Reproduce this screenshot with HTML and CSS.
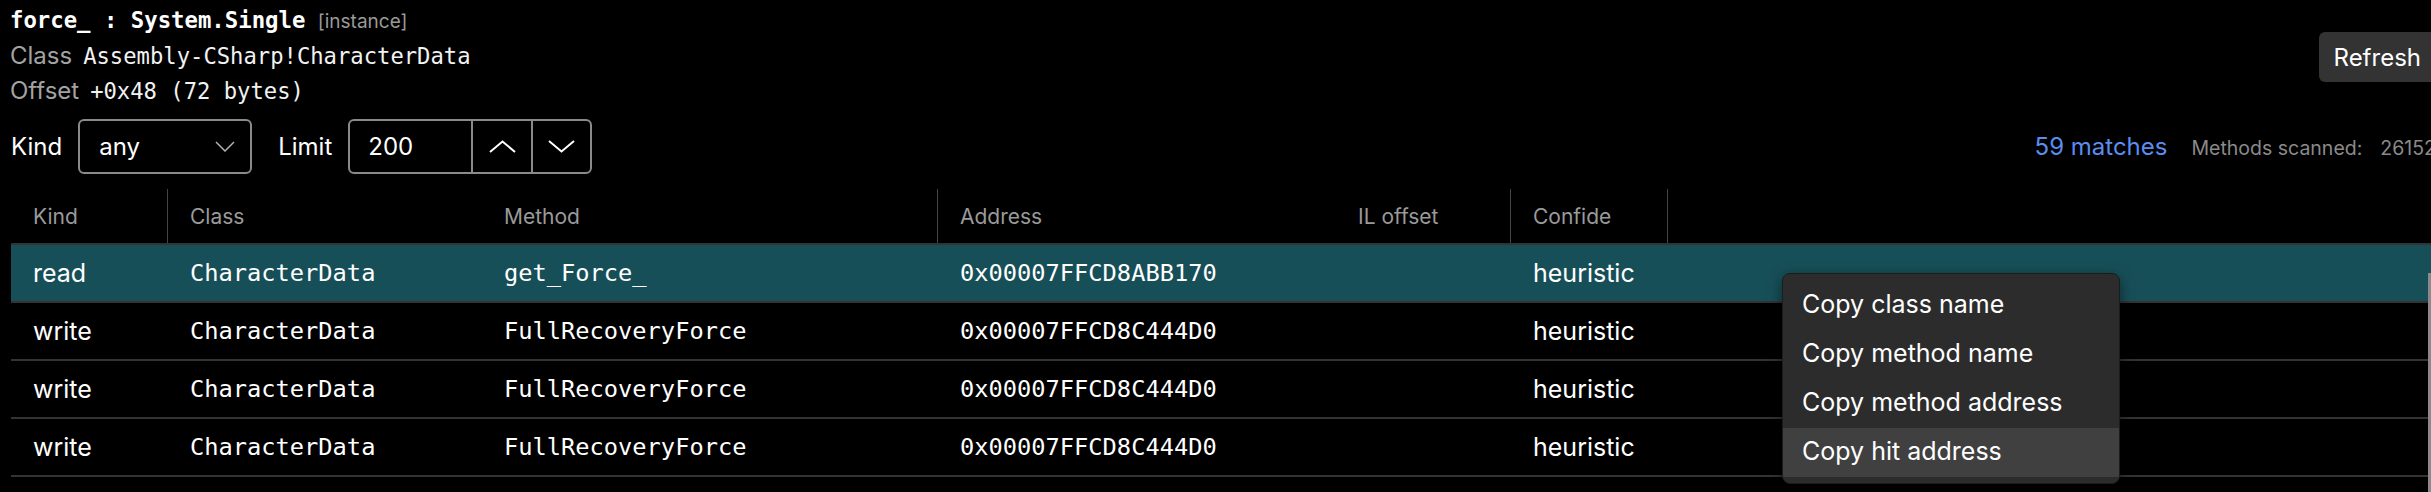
FILE: index.html
```html
<!DOCTYPE html>
<html>
<head>
<meta charset="utf-8">
<link rel="stylesheet" href="styles.css">
</head>
<body>
<div class="app">
  <div class="top">
    <div class="info">
      <div class="line"><span class="title-mono">force_ : System.Single</span> <span class="tag">[instance]</span></div>
      <div class="line"><span class="lab">Class</span><span class="val-mono">Assembly-CSharp!CharacterData</span></div>
      <div class="line"><span class="lab">Offset</span><span class="val-mono">+0x48 (72 bytes)</span></div>
    </div>
    <button class="refresh">Refresh</button>
  </div>

  <div class="controls">
    <div class="left-controls">
      <span class="clabel">Kind</span>
      <div class="select">
        <span>any</span>
        <svg width="20" height="11" viewBox="0 0 20 11"><polyline points="1,1 10,10 19,1" fill="none" stroke="#b0b0b0" stroke-width="1.5"/></svg>
      </div>
      <span class="clabel limit-label">Limit</span>
      <div class="limit">
        <div class="limit-val">200</div>
        <div class="step step-up">
          <svg width="27" height="13" viewBox="0 0 27 13"><polyline points="1,12 13.5,1.5 26,12" fill="none" stroke="#fff" stroke-width="2"/></svg>
        </div>
        <div class="step step-down">
          <svg width="27" height="13" viewBox="0 0 27 13"><polyline points="1,1 13.5,11.5 26,1" fill="none" stroke="#fff" stroke-width="2"/></svg>
        </div>
      </div>
    </div>
    <div class="stats">
      <span class="matches">59 matches</span>
      <span class="scanned">Methods scanned:</span>
      <span class="scanned num">26152</span>
    </div>
  </div>

  <div class="table">
    <div class="thead">
      <div class="th rz">Kind</div>
      <div class="th">Class</div>
      <div class="th rz">Method</div>
      <div class="th">Address</div>
      <div class="th rz">IL offset</div>
      <div class="th rz">Confide</div>
      <div class="th"></div>
    </div>
    <div class="tr sel">
      <div class="td">read</div>
      <div class="td mono">CharacterData</div>
      <div class="td mono">get_Force_</div>
      <div class="td mono">0x00007FFCD8ABB170</div>
      <div class="td"></div>
      <div class="td">heuristic</div>
      <div class="td"></div>
    </div>
    <div class="tr">
      <div class="td">write</div>
      <div class="td mono">CharacterData</div>
      <div class="td mono">FullRecoveryForce</div>
      <div class="td mono">0x00007FFCD8C444D0</div>
      <div class="td"></div>
      <div class="td">heuristic</div>
      <div class="td"></div>
    </div>
    <div class="tr">
      <div class="td">write</div>
      <div class="td mono">CharacterData</div>
      <div class="td mono">FullRecoveryForce</div>
      <div class="td mono">0x00007FFCD8C444D0</div>
      <div class="td"></div>
      <div class="td">heuristic</div>
      <div class="td"></div>
    </div>
    <div class="tr">
      <div class="td">write</div>
      <div class="td mono">CharacterData</div>
      <div class="td mono">FullRecoveryForce</div>
      <div class="td mono">0x00007FFCD8C444D0</div>
      <div class="td"></div>
      <div class="td">heuristic</div>
      <div class="td"></div>
    </div>
  </div>
</div>

<div class="scroll-thumb"></div>

<div class="menu">
  <div class="mi">Copy class name</div>
  <div class="mi">Copy method name</div>
  <div class="mi">Copy method address</div>
  <div class="mi hover">Copy hit address</div>
</div>
</body>
</html>
```

FILE: styles.css
```css
html, body {
  margin: 0;
  padding: 0;
  background: #000;
  overflow: hidden;
}
body {
  width: 2431px;
  height: 492px;
  color: #fff;
  font-family: Inter, "Noto Sans", sans-serif;
}
.app {
  box-sizing: border-box;
  width: 2446px;
  padding: 0 10px;
}
.top {
  display: flex;
  justify-content: space-between;
  align-items: flex-start;
}
.info {
  padding-top: 3px;
}
.line {
  height: 35px;
  line-height: 35px;
  white-space: nowrap;
}
.title-mono {
  font-family: "DejaVu Sans Mono", monospace;
  font-weight: bold;
  font-size: 22.3px;
  color: #fff;
}
.tag {
  font-size: 19px;
  color: #9a9a9a;
  margin-left: 8px;
}
.lab {
  font-size: 24px;
  color: #a3a3a3;
  margin-right: 11px;
}
.val-mono {
  font-family: "DejaVu Sans Mono", monospace;
  font-size: 22.2px;
  color: #f2f2f2;
}
.refresh {
  margin-top: 32px;
  height: 50px;
  padding: 0 15px;
  background: #333;
  border: none;
  border-radius: 6px;
  color: #fff;
  font-family: Inter, sans-serif;
  font-size: 24px;
}
.controls {
  display: flex;
  justify-content: space-between;
  align-items: center;
  margin-top: 11px;
  height: 55px;
}
.left-controls {
  display: flex;
  align-items: center;
}
.clabel {
  font-size: 24px;
  margin-left: 1px;
  margin-right: 16px;
}
.limit-label {
  margin-left: 26px;
}
.select {
  box-sizing: border-box;
  width: 174px;
  height: 55px;
  border: 2px solid #8a8a8a;
  border-radius: 6px;
  display: flex;
  align-items: center;
  justify-content: space-between;
  padding: 0 15px 0 19px;
  font-size: 24px;
}
.limit {
  box-sizing: border-box;
  width: 244px;
  height: 55px;
  border: 2px solid #8a8a8a;
  border-radius: 6px;
  display: flex;
  font-size: 24px;
}
.limit-val {
  box-sizing: border-box;
  width: 123px;
  padding-left: 18px;
  border-right: 2px solid #8a8a8a;
  display: flex;
  align-items: center;
}
.step {
  display: flex;
  align-items: center;
  justify-content: center;
  box-sizing: border-box;
}
.step-up {
  width: 60px;
  border-right: 2px solid #8a8a8a;
}
.step-down {
  width: 57px;
}
.stats {
  display: flex;
  align-items: baseline;
  white-space: nowrap;
}
.matches {
  font-size: 24px;
  color: #5b8def;
}
.scanned {
  font-size: 19.5px;
  color: #8a8a8a;
  margin-left: 24px;
}
.scanned.num {
  margin-left: 18px;
}
.table {
  margin-top: 15px;
  margin-left: 1px;
}
.thead, .tr {
  display: grid;
  grid-template-columns: 157px 314px 456px 398px 175px 157px 1fr;
}
.thead {
  height: 54px;
  border-bottom: 2px solid #333;
}
.th {
  box-sizing: border-box;
  padding-left: 22px;
  display: flex;
  align-items: center;
  font-size: 21px;
  color: #9a9a9a;
  white-space: nowrap;
  overflow: hidden;
}
.th.rz {
  border-right: 1px solid #444;
}
.tr {
  height: 56px;
  border-bottom: 2px solid #333;
  align-items: center;
}
.tr.sel {
  background: #174f58;
}
.td {
  padding-left: 22px;
  font-size: 25px;
  color: #fff;
  white-space: nowrap;
  overflow: hidden;
}
.td.mono {
  font-family: "DejaVu Sans Mono", monospace;
  font-size: 23.7px;
}
.scroll-thumb {
  position: absolute;
  left: 2428px;
  top: 273px;
  width: 8px;
  height: 230px;
  background: #8a8a8a;
}
.menu {
  position: absolute;
  left: 1782px;
  top: 273px;
  width: 338px;
  box-sizing: border-box;
  padding: 7px 0 6px;
  background: #2c2c2c;
  border: 1px solid #1c1c1c;
  border-radius: 8px;
  box-shadow: 0 4px 14px rgba(0,0,0,0.5);
}
.mi {
  box-sizing: border-box;
  height: 49px;
  display: flex;
  align-items: center;
  padding: 0 0 4px 19px;
  font-size: 25px;
  color: #fff;
  white-space: nowrap;
}
.mi.hover {
  background: #404040;
}
```
